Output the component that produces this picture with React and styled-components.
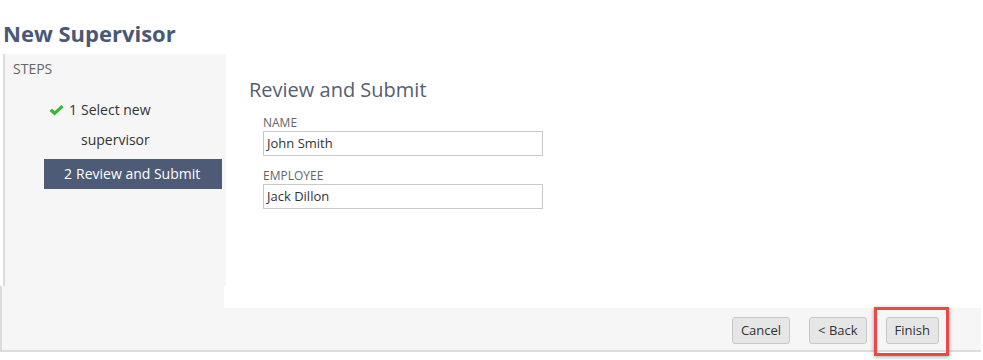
import React from "react";
import styled, { createGlobalStyle } from "styled-components";

const Global = createGlobalStyle`
  html, body { margin: 0; padding: 0; background: #fff; }
  body { font-family: "Open Sans", "Liberation Sans", sans-serif; color: #333; }
  * { box-sizing: border-box; }
`;

const Page = styled.div`
  width: 983px;
  height: 360px;
  overflow: hidden;
`;

const Title = styled.h1`
  margin: 0;
  height: 54px;
  padding: 18px 0 0 3px;
  font-size: 22px;
  line-height: 30px;
  font-weight: 700;
  color: #4a5877;
`;

const Main = styled.div`
  display: flex;
  height: 232px;
`;

const Sidebar = styled.nav`
  margin-left: 3px;
  width: 223px;
  border-left: 2px solid #dcdcdc;
  background: #f6f6f6;
  padding-top: 5px;
`;

const StepsLabel = styled.div`
  padding-left: 8px;
  font-size: 14px;
  line-height: 20px;
  color: #666;
  text-transform: uppercase;
`;

const StepList = styled.ol`
  list-style: none;
  margin: 16px 4px 0 39px;
  padding: 0;
  display: flex;
  flex-direction: column;
  gap: 4px;
`;

const Step = styled.li`
  display: flex;
  align-items: flex-start;
  padding-left: ${(p) => (p.$done ? "5px" : "20px")};
  font-size: 14px;
  line-height: 30px;
  color: ${(p) => (p.$active ? "#fff" : "#333")};
  background: ${(p) => (p.$active ? "#4d5b77" : "transparent")};
`;

const CheckSlot = styled.span`
  display: inline-flex;
  align-items: center;
  height: 30px;
  width: 20px;
  flex: none;
`;

const StepNum = styled.span`
  width: 12px;
  flex: none;
`;

const StepText = styled.span`
  width: 134px;
`;

const Content = styled.section`
  flex: 1;
  padding: 22px 0 0 23px;
`;

const Heading = styled.h2`
  margin: 0 0 11px;
  font-size: 20px;
  line-height: 28px;
  font-weight: 400;
  color: #555e72;
`;

const Field = styled.div`
  margin: 0 0 12px 14px;
  width: 280px;
`;

const Label = styled.div`
  font-size: 12px;
  line-height: 16px;
  color: #666;
  text-transform: uppercase;
`;

const ValueBox = styled.div`
  height: 25px;
  border: 1px solid #c9c9c9;
  background: #fff;
  padding: 0 3px;
  font-size: 13px;
  line-height: 23px;
  color: #333;
`;

const Bottom = styled.div`
  width: 981px;
  border-left: 2px solid #dcdcdc;
  border-bottom: 2px solid #dcdcdc;
`;

const SideTail = styled.div`
  width: 222px;
  height: 22px;
  background: #f6f6f6;
`;

const Footer = styled.footer`
  height: 42px;
  background: #f6f6f6;
  display: flex;
  justify-content: flex-end;
  align-items: flex-start;
  gap: 19px;
  padding: 9px 42px 0 0;
`;

const Button = styled.button`
  height: 27px;
  padding: 0 8px;
  border: 1px solid #c8c8c8;
  border-radius: 3px;
  background: #e6e6e6;
  font-family: "Open Sans", "Liberation Sans", sans-serif;
  font-size: 13px;
  line-height: 25px;
  color: #333;
  cursor: pointer;
`;

const Highlight = styled.span`
  position: relative;
  display: inline-flex;
`;

const Ring = styled.span`
  position: absolute;
  left: -12px;
  right: -10px;
  top: -10px;
  bottom: -12px;
  border: 3px solid #ee4646;
  box-shadow: 0 1px 4px rgba(0, 0, 0, 0.35);
  pointer-events: none;
`;

const Check = () => (
  <svg width="15" height="11" viewBox="0 0 15 11">
    <path d="M0.5 6 L3 3.6 L5.6 6.2 L12.4 0 L14.6 2.3 L5.6 10.6 Z" fill="#34b934" />
  </svg>
);

export default function App() {
  return (
    <Page>
      <Global />
      <Title>New Supervisor</Title>
      <Main>
        <Sidebar>
          <StepsLabel>Steps</StepsLabel>
          <StepList>
            <Step $done>
              <CheckSlot>
                <Check />
              </CheckSlot>
              <StepNum>1</StepNum>
              <StepText>Select new supervisor</StepText>
            </Step>
            <Step $active>
              <StepNum>2</StepNum>
              <StepText>Review and Submit</StepText>
            </Step>
          </StepList>
        </Sidebar>
        <Content>
          <Heading>Review and Submit</Heading>
          <Field>
            <Label>Name</Label>
            <ValueBox>John Smith</ValueBox>
          </Field>
          <Field>
            <Label>Employee</Label>
            <ValueBox>Jack Dillon</ValueBox>
          </Field>
        </Content>
      </Main>
      <Bottom>
        <SideTail />
        <Footer>
          <Button>Cancel</Button>
          <Button>&lt; Back</Button>
          <Highlight>
            <Button>Finish</Button>
            <Ring />
          </Highlight>
        </Footer>
      </Bottom>
    </Page>
  );
}
